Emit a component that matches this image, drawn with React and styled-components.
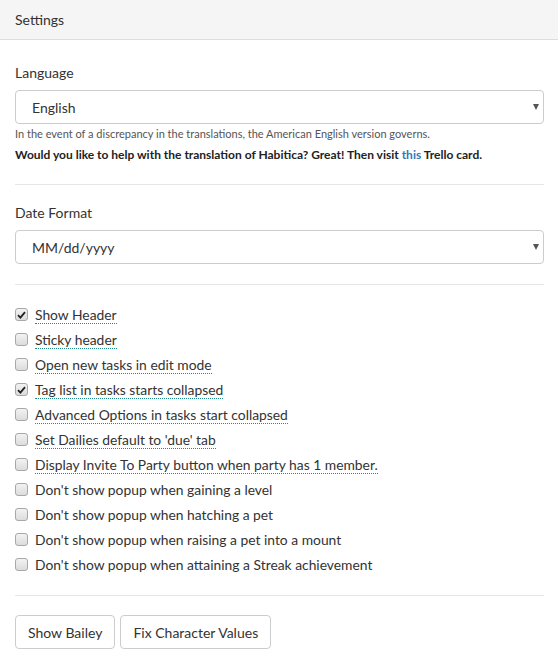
import styled, { createGlobalStyle } from "styled-components";

const GlobalStyle = createGlobalStyle`
  body {
    margin: 0;
    background: #fff;
    font-family: Lato, "Open Sans", sans-serif;
    color: #333;
  }
`;

const Panel = styled.div`
  width: 558px;
  background: #fff;
`;

const Header = styled.div`
  height: 39px;
  background: #f5f5f5;
  border-bottom: 1px solid #ddd;
  display: flex;
  align-items: center;
  padding: 0 15px;
  font-size: 14px;
  color: #333;
`;

const Body = styled.div`
  padding: 23px 14px 10px 15px;
`;

const Label = styled.div`
  font-size: 14px;
  line-height: 20px;
  margin-bottom: 7px;
`;

const SelectWrap = styled.div`
  position: relative;
  height: 34px;
`;

const Select = styled.select`
  appearance: none;
  width: 100%;
  height: 34px;
  box-sizing: border-box;
  border: 1px solid #ccc;
  border-radius: 4px;
  background: #fff;
  padding: 0 16px;
  font-family: Lato, sans-serif;
  font-size: 14px;
  color: #333;
  outline: none;
`;

const Caret = styled.span`
  position: absolute;
  right: 5px;
  top: 14px;
  width: 0;
  height: 0;
  border-left: 3.5px solid transparent;
  border-right: 3.5px solid transparent;
  border-top: 6px solid #555;
  pointer-events: none;
`;

const Help = styled.div`
  font-size: ${(p) => (p.$bold ? 12 : 11)}px;
  line-height: 18px;
  color: ${(p) => (p.$bold ? "#222" : "#555")};
  font-weight: ${(p) => (p.$bold ? 700 : 400)};
  margin-top: ${(p) => p.$mt || 0}px;
`;

const Link = styled.a`
  color: #3277b8;
  text-decoration: none;
`;

const Rule = styled.hr`
  border: 0;
  border-top: 1px solid #e6e6e6;
  margin: ${(p) => p.$mt}px 0 ${(p) => p.$mb}px;
`;

const List = styled.div`
  display: flex;
  flex-direction: column;
`;

const Row = styled.label`
  display: flex;
  align-items: center;
  height: 25px;
  font-size: 13.85px;
  color: #333;
`;

const Box = styled.span`
  width: 11px;
  height: 11px;
  border: 1px solid #a8a8a8;
  border-radius: 3px;
  background: linear-gradient(#f2f2f2, #dcdcdc);
  margin-right: 7px;
  display: flex;
  align-items: center;
  justify-content: center;
  flex-shrink: 0;
`;

const Text = styled.span`
  line-height: 18px;
  ${(p) =>
    p.$hint &&
    `border-bottom: 1px dotted #1e8c8c; line-height: 17px; margin-top: 1px;`}
`;

const Buttons = styled.div`
  display: flex;
  gap: 5px;
`;

const Button = styled.button`
  height: 34px;
  padding: 0 12px;
  border: 1px solid #ccc;
  border-radius: 4px;
  background: #fff;
  font-family: Lato, sans-serif;
  font-size: 14px;
  color: #333;
`;

const options = [
  { text: "Show Header", checked: true, hint: true },
  { text: "Sticky header", hint: true },
  { text: "Open new tasks in edit mode", hint: true },
  { text: "Tag list in tasks starts collapsed", checked: true, hint: true },
  { text: "Advanced Options in tasks start collapsed", hint: true },
  { text: "Set Dailies default to 'due' tab", hint: true },
  { text: "Display Invite To Party button when party has 1 member.", hint: true },
  { text: "Don't show popup when gaining a level" },
  { text: "Don't show popup when hatching a pet" },
  { text: "Don't show popup when raising a pet into a mount" },
  { text: "Don't show popup when attaining a Streak achievement" },
];

function Check({ checked }) {
  return (
    <Box>
      {checked && (
        <svg width="9" height="8" viewBox="0 0 9 8">
          <path d="M1 4.2 L3.4 6.6 L8 1.2" fill="none" stroke="#222" strokeWidth="1.8" />
        </svg>
      )}
    </Box>
  );
}

export default function App() {
  return (
    <>
      <GlobalStyle />
      <Panel>
        <Header>Settings</Header>
        <Body>
          <Label>Language</Label>
          <SelectWrap>
            <Select defaultValue="en">
              <option value="en">English</option>
            </Select>
            <Caret />
          </SelectWrap>
          <Help $mt={1}>
            In the event of a discrepancy in the translations, the American English version governs.
          </Help>
          <Help $bold $mt={3}>
            Would you like to help with the translation of Habitica? Great! Then visit <Link href="#">this</Link> Trello card.
          </Help>
          <Rule $mt={20} $mb={18} />
          <Label>Date Format</Label>
          <SelectWrap>
            <Select defaultValue="m">
              <option value="m">MM/dd/yyyy</option>
            </Select>
            <Caret />
          </SelectWrap>
          <Rule $mt={20} $mb={17} />
          <List>
            {options.map((o) => (
              <Row key={o.text}>
                <Check checked={o.checked} />
                <Text $hint={o.hint}>{o.text}</Text>
              </Row>
            ))}
          </List>
          <Rule $mt={18} $mb={19} />
          <Buttons>
            <Button>Show Bailey</Button>
            <Button>Fix Character Values</Button>
          </Buttons>
        </Body>
      </Panel>
    </>
  );
}
